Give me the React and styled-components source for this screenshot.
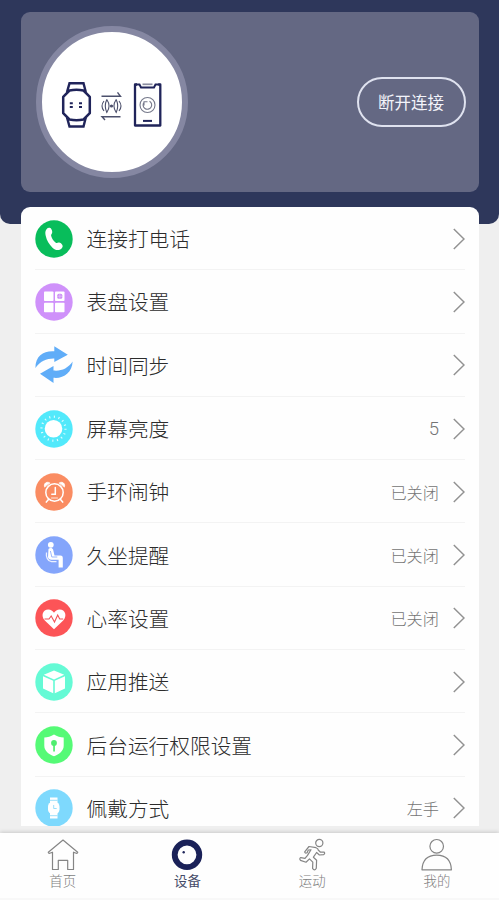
import React from "react";
import styled, { createGlobalStyle } from "styled-components";

const GlobalStyle = createGlobalStyle`
  * { box-sizing: border-box; }
  body {
    margin: 0;
    background: #efefef;
    font-family: "Noto Sans CJK SC", "Noto Sans", sans-serif;
    overflow: hidden;
  }
`;

const Screen = styled.div`
  width: 499px;
  height: 900px;
  display: flex;
  flex-direction: column;
  overflow: hidden;
  background: #efefef;
`;

const Header = styled.header`
  flex: none;
  height: 224px;
  padding: 12px 20px 0 21px;
  background: #2e375b;
  border-radius: 0 0 10px 10px;
`;

const DeviceCard = styled.section`
  height: 180px;
  padding: 0 13px 0 14.5px;
  display: flex;
  align-items: center;
  justify-content: space-between;
  background: #646883;
  border-radius: 9px;
`;

const DeviceBadge = styled.div`
  width: 152px;
  height: 152px;
  display: flex;
  border: 6px solid #8587a2;
  border-radius: 50%;
  background: #fff;
`;

const DisconnectButton = styled.button`
  width: 109px;
  height: 50px;
  padding: 0 1px 0 0;
  border: 2px solid #dfe2ef;
  border-radius: 25px;
  background: transparent;
  color: #f3f4fb;
  font: 400 16.5px/24px "Noto Sans CJK SC", sans-serif;
`;

const Settings = styled.main`
  flex: none;
  height: 619px;
  margin: -17px 20px 0 21px;
  padding: 0 14px;
  overflow: hidden;
  background: #fefefe;
  border-radius: 9px 9px 0 0;
`;

const Row = styled.div`
  height: 63.3px;
  padding-top: 1px;
  display: flex;
  align-items: center;
  border-bottom: 1px solid #f3f3f3;
`;

const RowIcon = styled.svg`
  flex: none;
  width: 38px;
  height: 38px;
  overflow: visible;
`;

const RowLabel = styled.span`
  flex: 1;
  margin: -1px 0 0 13.5px;
  color: #2c2c2c;
  font-size: 20.7px;
  font-weight: 300;
  line-height: 30px;
`;

const RowValue = styled.span`
  margin-right: 14px;
  color: #747474;
  font-family: ${(p) => (p.$numeric ? '"Roboto", sans-serif' : "inherit")};
  font-size: ${(p) => (p.$numeric ? "18.5px" : "16.2px")};
  font-weight: 300;
  line-height: 24px;
`;

const Chevron = styled.svg`
  flex: none;
  width: 12px;
  height: 22px;
`;

const TabBar = styled.nav`
  flex: none;
  height: 65px;
  margin-top: 7px;
  display: grid;
  grid-template-columns: repeat(4, 1fr);
  background: #fefefe;
  box-shadow: 0 -1px 4px rgba(0, 0, 0, 0.16);
`;

const BottomEdge = styled.div`
  flex: 1;
  background: #f8f8f8;
`;

const Tab = styled.div`
  display: flex;
  flex-direction: column;
  align-items: center;
  padding: 5px 0 0 0.6px;
  color: ${(p) => (p.$active ? "#454b68" : "#7d7d7d")};
  font-size: 13.4px;
  font-weight: ${(p) => (p.$active ? 400 : 300)};
  line-height: 18px;
`;

const TabIcon = styled.svg`
  width: 34px;
  height: 34px;
  margin-bottom: -1px;
`;

function SyncArt() {
  return (
    <svg width="140" height="140" viewBox="41.5 32 140 140" fill="none" stroke="#20245a">
      <path d="M66.5 92 69 83.3h14l2.3 8.7M66.5 117.5l2.5 9h14l2.3-9" strokeWidth="2.4" />
      <path d="M69 90.5q7-1.6 14 0l6.3 6.3v16.4l-6.3 6.3q-7 1.6-14 0l-6.3-6.3V96.8z" strokeWidth="2.5" strokeLinejoin="round" />
      <path d="M69.3 103.3h3m-3 3.7h3m6.2-3.7h3m-3 3.7h3" strokeWidth="2" />
      <g stroke="#4c506c" strokeWidth="1.1">
        <path d="M101 96.3h19l-3-4M120 116.7h-18.5l3 3.3" strokeWidth="1.4" />
        <path d="M106.3 99.5q4.5 6.5 0 13q-3-6.5 0-13M115.7 99.5q-4.5 6.5 0 13q3-6.5 0-13" />
        <path d="M103.5 101q-4 5 0 10M118.5 101q4 5 0 10" />
        <circle cx="111" cy="106" r="1" fill="#4c506c" />
      </g>
      <path d="M136.5 84.5h-2v41h25.3v-41h-2" strokeWidth="2.3" strokeLinejoin="round" />
      <path d="M135 84.500h4l1.500 3h13l1.500-3h4" strokeWidth="2" />
      <path d="M142 84.3h10" stroke="#8b8da0" strokeWidth="1.7" />
      <path d="M142.5 120.9h9" strokeWidth="2" />
      <g stroke="#75788a" strokeWidth="1.1">
        <circle cx="147" cy="105" r="7.5" />
        <path d="M143.5 102.3a4.3 4.3 0 1 0 5.5-1.1M143.5 105.5v-3.8h3.5" />
      </g>
    </svg>
  );
}

const glyphs = {
  phone: (
    <path
      d="M11.5 9.2c1.5-1.8 3.9-1.8 4.9.1.8 1.5 1.2 3 .5 4.3-.5.9-1 1.3-.7 2.4.8 2.8 2.2 5 4.6 6.7 1 .7 1.7.2 2.700-.1 1.5-.4 3.2 1.1 3.9 2.5.9 1.9-.5 3.6-2.2 4.4-2.6 1.2-5.5.4-7.7-1.8-3.4-3.4-5.8-7.3-6.8-12-.5-2.4-.7-4.8.8-6.5z"
      fill="#fff"
    />
  ),
  dial: (
    <g fill="#fff">
      <rect x="9" y="8.5" width="9.5" height="9.5" rx=".8" />
      <rect x="20" y="8.5" width="9.5" height="9.5" rx=".8" />
      <rect x="9" y="19.7" width="9.5" height="9.5" rx=".8" />
      <rect x="20" y="19.7" width="9.5" height="9.5" rx=".8" />
      <rect x="22.3" y="10.7" width="5" height="5" rx="1.5" fill="#cb8df5" />
      <path d="M24.8 11v4.5M22.5 13.2h4.6" stroke="#e7c8fa" strokeWidth=".7" />
    </g>
  ),
  sync: (
    <g fill="#60adf8">
      <path d="M.4 22C.4 9.5 9 4.5 19.3 5.3V.2l13.500 8.5-13.5 7.3v-3.5C12 12.3 5 15 .4 22z" />
      <path d="M37.6 15.5C37.4 26.5 28 33 18.5 31.8v5.2L5 27.8l13.5-7.8v4.5c7.5.8 14.5-2 19.1-9z" />
    </g>
  ),
  brightness: (
    <g>
      <circle cx="18.5" cy="18.7" r="8.8" fill="#fff" />
      <circle cx="18.5" cy="18.7" r="12" fill="none" stroke="#e0fcff" strokeWidth="2.2" strokeDasharray="1.1 3.612" />
    </g>
  ),
  alarm: (
    <g fill="none" stroke="#fff" strokeWidth="1.5" strokeLinecap="round">
      <circle cx="19.5" cy="19.5" r="8.7" />
      <path d="m13.5 26.5-2.2 2.6M25.5 26.5l2.2 2.6M20.3 14.5v6.7h-3.5" />
      <path d="M9.5 13.8c-1.2-3.4 2.5-6 5.3-3.9zM29.5 13.8c1.2-3.4-2.5-6-5.3-3.9z" fill="#fff" strokeWidth=".7" />
      <path d="M16.5 25h6" strokeWidth=".8" />
    </g>
  ),
  sitting: (
    <g>
      <circle cx="15.8" cy="8.8" r="2.9" fill="#fff" />
      <path d="M13.5 13c1.3-1.6 4-1.4 4.6.6l1.4 5.9h5.8c1.6 0 2.5.8 2.5 2.5v9.5h-4.2v-7.7H16.5c-2.1 0-3.2-1-3.5-2.8z" fill="#fff" />
      <path d="M11.5 16.5c-.8 4.5 1.4 8.8 5 9.2h5" fill="none" stroke="#edf1ff" strokeWidth="1.3" />
      <path d="m15.4 15 1.4 6h5.5" fill="none" stroke="#84a5fb" strokeWidth=".8" />
    </g>
  ),
  heart: (
    <g>
      <path d="M19 30.3 9.8 21.4C5.5 17 7.8 10.5 13.3 10.5c2.5 0 4.5 1.4 5.7 3.3 1.2-1.9 3.2-3.3 5.7-3.3 5.5 0 7.8 6.5 3.5 10.9z" fill="#fff" />
      <path d="M9.5 20H14l2.2-3 3.3 6 3.2-7 2 4h3.5" fill="none" stroke="#f45358" strokeWidth="1.1" />
    </g>
  ),
  cube: (
    <g fill="#fff">
      <path d="m19 7.5 10.2 4.3L19 16.5 8.8 11.8z" />
      <path d="m8 13.3 10.2 4.5v12.5L8 25.5zM30 13.3l-10.2 4.5v12.5L30 25.5z" />
    </g>
  ),
  shield: (
    <g>
      <path d="M19 8.5c3.2 2.1 6.3 3 9.7 3v8.3c0 5.3-4.5 8.5-9.7 10.5-5.2-2-9.7-5.2-9.7-10.5v-8.3c3.4 0 6.5-.9 9.7-3z" fill="#fff" />
      <path d="M18.2 17v8.5h1.7V17z" fill="#4fee70" />
      <circle cx="19" cy="17" r="2.9" fill="#4fee70" />
    </g>
  ),
  watch: (
    <g>
      <path d="M15 8.5h7.5v6H15zM15 23.5h7.5v6H15z" fill="#fff" />
      <rect x="13" y="13" width="11.5" height="12" rx="4.5" fill="#fff" />
      <path d="M15 11.3h7.5M15 26.7h7.5M18.7 16v3.5h3" fill="none" stroke="#82d7f8" strokeWidth=".8" />
    </g>
  ),
};

const rows = [
  { icon: "phone", color: "#08bd5b", label: "连接打电话" },
  { icon: "dial", color: "#cf91fa", label: "表盘设置" },
  { icon: "sync", label: "时间同步" },
  { icon: "brightness", color: "#52e9fb", label: "屏幕亮度", value: "5", numeric: true },
  { icon: "alarm", color: "#fa8c62", label: "手环闹钟", value: "已关闭" },
  { icon: "sitting", color: "#84a5fb", label: "久坐提醒", value: "已关闭" },
  { icon: "heart", color: "#fc5457", label: "心率设置", value: "已关闭" },
  { icon: "cube", color: "#65fad5", label: "应用推送" },
  { icon: "shield", color: "#55fa76", label: "后台运行权限设置" },
  { icon: "watch", color: "#7ed9fd", label: "佩戴方式", value: "左手" },
];

const tabs = [
  {
    label: "首页",
    art: <path d="M17 2 2.3 14.3l.8 1.2 3.4-1.3v17.3h5.8V22.3h9.4v9.2h5.8V14.2l3.4 1.3.8-1.2z" />,
  },
  {
    label: "设备",
    active: true,
    art: (
      <g>
        <circle cx="17" cy="16.8" r="12.3" stroke="#1a2158" strokeWidth="5.8" />
        <circle cx="13.7" cy="14.3" r="1.2" fill="#20275b" stroke="none" />
      </g>
    ),
  },
  {
    label: "运动",
    art: (
      <g>
        <circle cx="24.3" cy="5" r="3.6" />
        <path d="M14 8.5 21 9.7q2.3.8 2.2 2.3l2.3 2.2 3.5-.2q1.5 1.3-.3 2.6l-4.3.4-2.8-2.5-3.2 4.7 3.2 3-.3 8q-1.8 3.2-3.7.2l.2-6.3-3.3-3.2-3.5 3.3-5.5-1.800q-1.5-1.8.3-2.8l4.2.8 2.5-3 3.5-5.6-2.7.2-1.2 2.8q-2.1.9-2.4-1z" />
      </g>
    ),
  },
  {
    label: "我的",
    art: (
      <g>
        <circle cx="16.7" cy="8.3" r="6.8" />
        <path d="M2 31.8c.4-9.6 5.3-14.6 14.7-14.6s14.3 5 14.7 14.6z" />
      </g>
    ),
  },
];

export default function App() {
  return (
    <Screen>
      <GlobalStyle />
      <Header>
        <DeviceCard>
          <DeviceBadge>
            <SyncArt />
          </DeviceBadge>
          <DisconnectButton>断开连接</DisconnectButton>
        </DeviceCard>
      </Header>
      <Settings>
        {rows.map((row) => (
          <Row key={row.label}>
            <RowIcon viewBox="0 0 38 38">
              {row.color && <circle cx="19" cy="19" r="18.7" fill={row.color} />}
              {glyphs[row.icon]}
            </RowIcon>
            <RowLabel>{row.label}</RowLabel>
            {row.value && <RowValue $numeric={row.numeric}>{row.value}</RowValue>}
            <Chevron viewBox="0 0 12 22" fill="none" stroke="#929292" strokeWidth="1.5">
              <path d="m.8 1 10.2 10L.8 21" />
            </Chevron>
          </Row>
        ))}
      </Settings>
      <TabBar>
        {tabs.map((tab) => (
          <Tab key={tab.label} $active={tab.active}>
            <TabIcon viewBox="0 0 34 34" fill="none" stroke="#858585" strokeWidth="1.2" strokeLinejoin="round">
              {tab.art}
            </TabIcon>
            {tab.label}
          </Tab>
        ))}
      </TabBar>
      <BottomEdge />
    </Screen>
  );
}
